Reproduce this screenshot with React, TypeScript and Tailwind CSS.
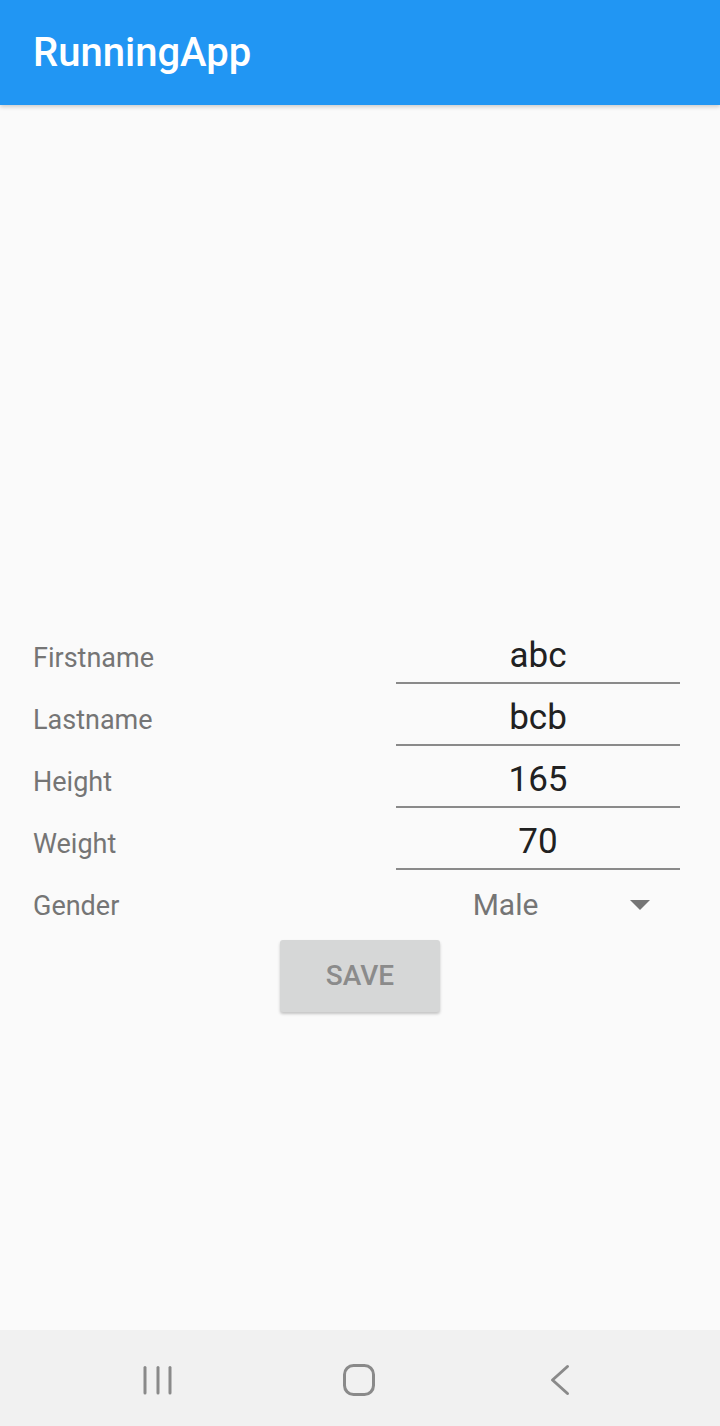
import React from "react";

const font = { fontFamily: "Roboto, 'Noto Sans', sans-serif" };

function Row({ label, value }: { label: string; value: string }) {
  return (
    <div className="flex items-baseline">
      <div className="w-[363px] text-[27px] text-[#757575]">{label}</div>
      <div className="w-[284px] h-[58px] pt-[4px] leading-[52px] border-b-2 border-[#8a8a8a] text-center text-[35px] text-[#212121]">
        {value}
      </div>
    </div>
  );
}

export default function App() {
  return (
    <div className="w-[720px] h-[1426px] flex flex-col bg-[#fafafa] overflow-hidden" style={font}>
      <header className="h-[105px] bg-[#2196f3] flex items-center pl-[33px] shadow-[0_2px_4px_rgba(0,0,0,0.18)] relative z-10">
        <h1 className="text-[40px] font-medium text-white leading-none">RunningApp</h1>
      </header>
      <main className="flex-1 pt-[521px] pl-[33px]">
        <div className="flex flex-col gap-1">
          <Row label="Firstname" value="abc" />
          <Row label="Lastname" value="bcb" />
          <Row label="Height" value="165" />
          <Row label="Weight" value="70" />
          <div className="flex items-baseline h-[58px] pt-[3px]">
            <div className="w-[363px] text-[27px] text-[#757575] leading-[55px]">Gender</div>
            <div className="w-[284px] flex items-center leading-[55px]">
              <span className="w-[219px] text-center text-[30px] text-[#757575]">Male</span>
              <svg width="20" height="10" viewBox="0 0 20 10" className="ml-[15px]">
                <path d="M0 0 L20 0 L10 10 Z" fill="#757575" />
              </svg>
            </div>
          </div>
        </div>
        <div className="mt-[8px] ml-[247px] w-[160px] h-[72px] bg-[#d6d7d7] rounded-[3px] shadow-[0_2px_3px_rgba(0,0,0,0.22)] flex items-center justify-center text-[28px] font-medium text-[#8b8b8b]">
          SAVE
        </div>
      </main>
      <nav className="h-[96px] bg-[#f1f1f1] flex items-center pt-1 pl-[138px] gap-[161px]">
        <svg width="40" height="40" viewBox="0 0 40 40" fill="none" stroke="#8a8a8a" strokeWidth="3" strokeLinecap="round">
          <line x1="7" y1="7.5" x2="7" y2="33" />
          <line x1="20" y1="7.5" x2="20" y2="33" />
          <line x1="32" y1="7.5" x2="32" y2="33" />
        </svg>
        <svg width="40" height="40" viewBox="0 0 40 40" fill="none" stroke="#8a8a8a" strokeWidth="3">
          <rect x="5.5" y="5.5" width="29" height="29" rx="9" />
        </svg>
        <svg width="40" height="40" viewBox="0 0 40 40" fill="none" stroke="#8a8a8a" strokeWidth="3" strokeLinecap="round" strokeLinejoin="round">
          <path d="M27.5 6.5 L12.5 20 L27.5 33.5" />
        </svg>
      </nav>
    </div>
  );
}
